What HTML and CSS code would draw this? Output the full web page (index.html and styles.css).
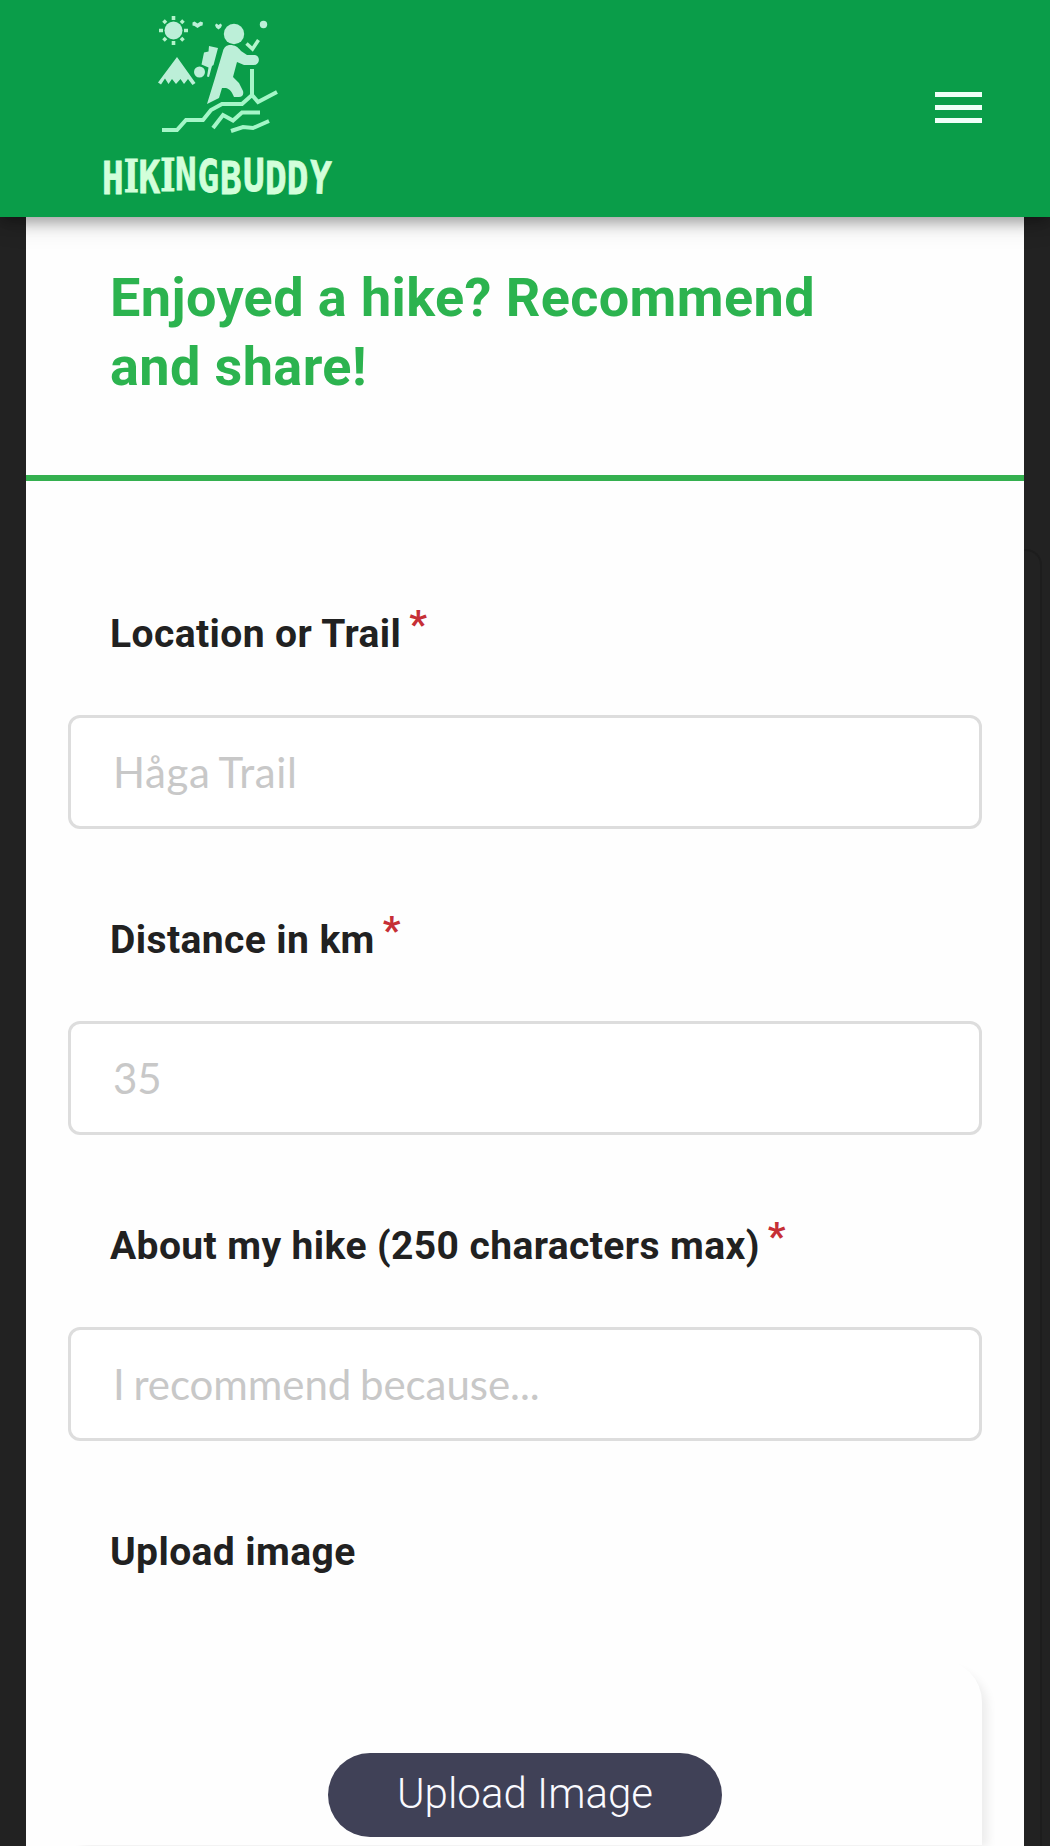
FILE: index.html
```html
<!DOCTYPE html>
<html lang="en">
<head>
<meta charset="utf-8">
<title>HikingBuddy</title>
<link rel="stylesheet" href="styles.css">
</head>
<body>
<header class="header">
  <svg class="logo" width="250" height="217" viewBox="90 0 250 217" role="img" aria-label="HikingBuddy">
    <g class="logo-art">
      <circle cx="173.500" cy="30.500" r="9"/>
      <path class="rays" d="M173.500 16v4M173.500 41v4M159 30.500h4M184 30.500h4M163.500 20.500l2.500 2.500M181 38l2.500 2.500M163.500 40.500l2.500-2.500M181 23l2.500-2.500"/>
      <path d="M192.500 22.500l2-1 3 2 3-2 2.500 1-.5 3-2 .5-3 2-3-2-2-.5zM215 25l1.500-1.500 2 1.500 2-1.500 1.500 1.500-1 2.500-2.500 2-2.500-2z"/>
      <circle cx="263.500" cy="24.500" r="3.700"/>
      <circle cx="234" cy="34" r="10.200"/>
      <path d="M177 57l18.500 26-3 2-4.500-6-4 5-3.500-5-4.500 5-4-5-3.500 5-3.500-5.500-4 6-3-2z"/>
      <circle cx="199.500" cy="72" r="5.500"/>
      <path d="M209 46l9 2-4.500 17-1.500 1-3 11-2-.5 1.500-9-7-3 2.500-12 4.500-1z"/>
      <path d="M230 45c5 0 8 2 11 6l6 4h7c7 0 6 10 0 10h-10l-7-3-4 15 6 6 4 8c1 4-1 6-4 6h-5c-2-5-4-8-8-9h-4l-3 10-12 6 8-26 8-27c1-4 4-6 7-6z"/>
      <path class="checks" d="M246.500 43.500l6 5.500 6-9"/>
    </g>
    <path class="ground" d="M252 69v26M162 130h15l9-10h17l8-10 11-6h20l10-9 6 7 19-10M213 128l10-13 10 5.500 9-8h18M231 131l12-4 10 1 16-7"/>
    <text class="logo-name" transform="scale(.8 1)" x="127.500 154.600 173.100 200.400 218.800 246.900 275 303.800 331.300 358.400 385.500" y="194 192 193 191.500 190 192 194.500 191 194 194 192.500" rotate="0 0 0 0 0 0 0 0 0 0 4">H<tspan class="slab">I</tspan>K<tspan class="slab">I</tspan>NGBUDDY</text>
  </svg>
  <button class="menu" aria-label="Menu"><span></span><span></span><span></span></button>
</header>
<div class="page">
  <main class="sheet">
    <h1 class="title">Enjoyed a hike? Recommend and share!</h1>
    <form class="form">
      <div class="field">
        <label class="label" for="trail">Location or Trail<span class="required">*</span></label>
        <input class="input input-trail" id="trail" placeholder="Håga Trail">
      </div>
      <div class="field">
        <label class="label" for="distance">Distance in km<span class="required">*</span></label>
        <input class="input" id="distance" placeholder="35">
      </div>
      <div class="field">
        <label class="label" for="about">About my hike (250 characters max)<span class="required">*</span></label>
        <input class="input input-about" id="about" placeholder="I recommend because...">
      </div>
      <div class="field">
        <span class="label">Upload image</span>
        <div class="upload"><button class="upload-button" type="button">Upload Image</button></div>
      </div>
    </form>
  </main>
  <div class="backdrop-edge"></div>
</div>
</body>
</html>
```

FILE: styles.css
```css
* { box-sizing: border-box; }

body {
  margin: 0;
  height: 1846px;
  overflow: hidden;
  background: #222;
  color: #212121;
  font-family: Roboto, "Liberation Sans", sans-serif;
}

.header {
  position: relative;
  z-index: 1;
  display: flex;
  justify-content: space-between;
  align-items: center;
  height: 217px;
  padding: 0 68px 0 90px;
  background: #0a9d49;
  box-shadow: 0 6px 12px rgba(0, 0, 0, .26), 0 3px 28px rgba(0, 0, 0, .18);
}

.logo-art { fill: #bcefd8; }
.rays { stroke: #b4f3cb; stroke-width: 3.600; }
.checks { fill: none; stroke: #b4f5cd; stroke-width: 3.500; }
.ground { fill: none; stroke: #a5f6c8; stroke-width: 4; }

.logo-name {
  fill: #d2ffda;
  stroke: #d2ffda;
  stroke-width: .8;
  font: bold 45px "DejaVu Sans Mono", monospace;
}

.slab { font-family: "DejaVu Serif Condensed", "DejaVu Serif", serif; font-stretch: condensed; }

.menu {
  display: flex;
  flex-direction: column;
  gap: 8px;
  width: 47px;
  margin-top: -2px;
  padding: 0;
  border: 0;
  background: none;
}

.menu span { height: 5.300px; background: #effff8; }

.page { display: flex; height: 1629px; padding-left: 26px; }

.sheet { width: 998px; height: 1629px; background: #fefefe; }

.title {
  height: 264px;
  margin: 0;
  padding: 46px 180px 0 84px;
  border-bottom: 6px solid #34b04f;
  color: #2cb34f;
  font-size: 54px;
  line-height: 69px;
  letter-spacing: .4px;
}

.form {
  display: flex;
  flex-direction: column;
  gap: 78px;
  padding: 120px 42px 0;
}

.label {
  display: block;
  height: 64px;
  margin-bottom: 50px;
  padding-left: 42px;
  font-size: 39px;
  font-weight: 700;
  line-height: 66px;
  letter-spacing: .4px;
  white-space: nowrap;
}

.field { height: 228px; }

.required {
  position: relative;
  top: -9px;
  margin-left: 8px;
  color: #c62f36;
}

.input {
  display: block;
  width: 914px;
  height: 114px;
  padding: 0 42px;
  border: 3px solid #ddd;
  border-radius: 12px;
  background: #fff;
  font: 42px Lato, sans-serif;
}

.input-trail { letter-spacing: .6px; word-spacing: -2px; }
.input-about { letter-spacing: -.05px; word-spacing: -2px; }

.input::placeholder { color: #c8c8c8; opacity: 1; }

.upload {
  display: flex;
  justify-content: center;
  align-items: flex-start;
  height: 185px;
  margin-top: 77px;
  padding-top: 93px;
  border-radius: 42px 42px 0 0;
  background: #fefefe;
  box-shadow: 10px 6px 10px -4px rgba(0, 0, 0, .07);
}

.upload-button {
  width: 394px;
  height: 84px;
  padding: 0 0 3px;
  border: 0;
  border-radius: 42px;
  background: #404157;
  color: #fafaff;
  font: 300 42px Roboto, sans-serif;
}

.backdrop-edge {
  width: 18px;
  margin-top: 332px;
  border: solid #1d1d1d;
  border-width: 2px 2px 0 0;
  border-radius: 0 16px 0 0;
}
```
